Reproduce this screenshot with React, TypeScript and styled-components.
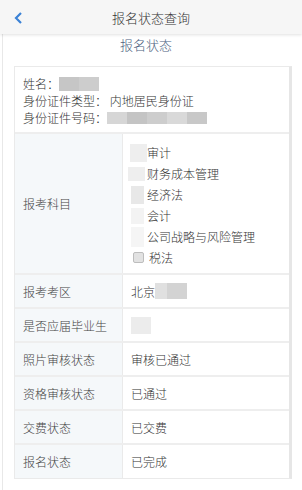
import React from "react";
import styled, { createGlobalStyle } from "styled-components";

const GlobalStyle = createGlobalStyle`
  html, body {
    margin: 0;
    padding: 0;
    background: #fff;
    font-family: "Noto Sans CJK SC", "Noto Sans", sans-serif;
    font-weight: 300;
    color: #333;
  }
`;

const Page = styled.div`
  width: 302px;
  height: 490px;
  overflow: hidden;
  position: relative;
  background: #fff;
`;

const Header = styled.div`
  height: 34px;
  display: flex;
  align-items: center;
  justify-content: center;
  position: relative;
  background: #f6f6f6;
  box-shadow: 0 1px 3px rgba(0, 0, 0, 0.12);
  font-size: 13px;
  color: #333;
  z-index: 1;
`;

const Back = styled.div`
  position: absolute;
  left: 13px;
  top: 10px;
  width: 12px;
  height: 14px;
`;

const Body = styled.div`
  margin: 0 12px 0 2px;
  border-left: 1px solid #e8e8e8;
  padding: 0 0 0 11px;
  height: 456px;
`;

const SubTitle = styled.div`
  height: 32px;
  line-height: 22px;
  text-align: center;
  font-size: 13px;
  color: #4d5f80;
  padding-right: 12px;
`;

const Card = styled.div`
  width: 274px;
  border: 1px solid #eaeaea;
  border-right: 3px solid #e6e6e6;
  background: #fff;
`;

const Info = styled.div`
  padding: 8px 8px 6px;
  font-size: 12px;
  line-height: 17px;
  border-bottom: 2px solid #eeeeee;
`;

const Line = styled.div`
  display: flex;
  align-items: center;
`;

const Blur = styled.span<{ w: number; h?: number; c?: string }>`
  display: inline-block;
  width: ${(p) => p.w}px;
  height: ${(p) => p.h ?? 14}px;
  background: ${(p) => p.c ?? "#c9c9c9"};
`;

const Row = styled.div<{ h: number }>`
  display: flex;
  height: ${(p) => p.h}px;
  border-bottom: 2px solid #eeeeee;
  font-size: 12px;

  &:last-child {
    border-bottom: 0;
  }
`;

const Label = styled.div`
  width: 108px;
  flex: none;
  display: flex;
  align-items: center;
  padding-left: 8px;
  box-sizing: border-box;
  background: #f5f8fa;
  border-right: 1px solid #eaeaea;
  color: #444;
`;

const Value = styled.div`
  flex: 1;
  display: flex;
  align-items: center;
  padding-left: 8px;
  color: #333;
`;

const SubjectList = styled.div`
  flex: 1;
  display: flex;
  flex-direction: column;
  justify-content: center;
  padding: 3px 0 0 7px;
  gap: 2.5px;
`;

const Subject = styled.div`
  display: flex;
  align-items: center;
  height: 18.5px;
  font-size: 12px;
`;

const Mark = styled.span<{ w: number; h: number; dx: number; c: string }>`
  display: inline-block;
  width: ${(p) => p.w}px;
  height: ${(p) => p.h}px;
  margin-left: ${(p) => p.dx}px;
  margin-right: ${(p) => 17 - p.w - p.dx}px;
  background: ${(p) => p.c};
`;

const Check = styled.span`
  display: inline-block;
  width: 9px;
  height: 9px;
  margin: 0 5px 0 3px;
  border: 1px solid #bdbdbd;
  border-radius: 2px;
  background: #e2e2e2;
`;

const subjects = [
  { name: "审计", w: 17, h: 18, dx: 0, c: "#eeeeee" },
  { name: "财务成本管理", w: 17, h: 14, dx: -2, c: "#eeeeee" },
  { name: "经济法", w: 13, h: 18, dx: 1, c: "#e8e8e8" },
  { name: "会计", w: 13, h: 16, dx: 1, c: "#f3f3f3" },
  { name: "公司战略与风险管理", w: 13, h: 20, dx: 1, c: "#f5f5f5" },
];

export default function App() {
  return (
    <Page>
      <GlobalStyle />
      <Header>
        <Back>
          <svg width="12" height="14" viewBox="0 0 12 14">
            <path d="M8 2 L3 7 L8 12" fill="none" stroke="#3b82d6" strokeWidth="2.2" />
          </svg>
        </Back>
        报名状态查询
      </Header>
      <Body>
        <SubTitle>报名状态</SubTitle>
        <Card>
          <Info>
            <Line>
              姓名：
              <Blur w={20} c="#c6c6c6" />
              <Blur w={20} c="#cdcdcd" />
            </Line>
            <Line>身份证件类型： 内地居民身份证</Line>
            <Line>
              身份证件号码：
              <Blur w={20} c="#d6d6d6" h={12} />
              <Blur w={20} c="#c4c4c4" h={12} />
              <Blur w={20} c="#cdcdcd" h={12} />
              <Blur w={20} c="#d9d9d9" h={12} />
              <Blur w={20} c="#c8c8c8" h={12} />
            </Line>
          </Info>
          <Row h={139}>
            <Label>报考科目</Label>
            <SubjectList>
              {subjects.map((s) => (
                <Subject key={s.name}>
                  <Mark w={s.w} h={s.h} dx={s.dx} c={s.c} />
                  {s.name}
                </Subject>
              ))}
              <Subject>
                <Check />
                税法
              </Subject>
            </SubjectList>
          </Row>
          <Row h={32}>
            <Label>报考考区</Label>
            <Value>
              北京
              <Blur w={12} h={16} c="#e0e0e0" />
              <Blur w={20} h={16} c="#d3d3d3" />
            </Value>
          </Row>
          <Row h={32}>
            <Label>是否应届毕业生</Label>
            <Value>
              <Blur w={20} h={17} c="#ececec" />
            </Value>
          </Row>
          <Row h={32}>
            <Label>照片审核状态</Label>
            <Value>审核已通过</Value>
          </Row>
          <Row h={32}>
            <Label>资格审核状态</Label>
            <Value>已通过</Value>
          </Row>
          <Row h={32}>
            <Label>交费状态</Label>
            <Value>已交费</Value>
          </Row>
          <Row h={33}>
            <Label>报名状态</Label>
            <Value>已完成</Value>
          </Row>
        </Card>
      </Body>
    </Page>
  );
}
